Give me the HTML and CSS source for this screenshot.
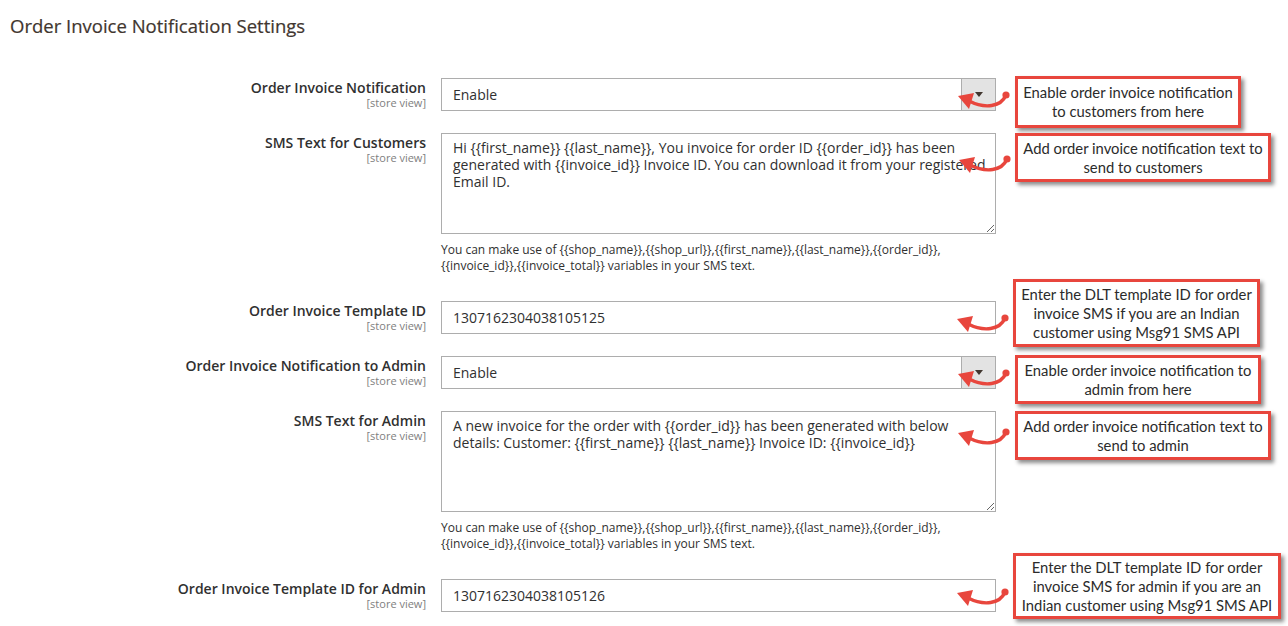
FILE: index.html
```html
<!DOCTYPE html>
<html lang="en">
<head>
    <meta charset="UTF-8">
    <title>Order Invoice Notification Settings</title>
    <link rel="stylesheet" href="styles.css">
</head>
<body>
<div class="page">
    <h2 class="section-title">Order Invoice Notification Settings</h2>

    <div class="form">
        <div class="row">
            <div class="label"><span>Order Invoice Notification</span><small>[store view]</small></div>
            <div class="control">
                <div class="select"><span>Enable</span><i class="select-btn"></i></div>
            </div>
        </div>

        <div class="row">
            <div class="label"><span>SMS Text for Customers</span><small>[store view]</small></div>
            <div class="control">
                <textarea class="textarea" readonly>Hi {{first_name}} {{last_name}}, You invoice for order ID {{order_id}} has been generated with {{invoice_id}} Invoice ID. You can download it from your registered Email ID.</textarea>
                <p class="note">You can make use of {{shop_name}},{{shop_url}},{{first_name}},{{last_name}},{{order_id}}, {{invoice_id}},{{invoice_total}} variables in your SMS text.</p>
            </div>
        </div>

        <div class="row">
            <div class="label"><span>Order Invoice Template ID</span><small>[store view]</small></div>
            <div class="control">
                <div class="input">1307162304038105125</div>
            </div>
        </div>

        <div class="row">
            <div class="label"><span>Order Invoice Notification to Admin</span><small>[store view]</small></div>
            <div class="control">
                <div class="select"><span>Enable</span><i class="select-btn"></i></div>
            </div>
        </div>

        <div class="row">
            <div class="label"><span>SMS Text for Admin</span><small>[store view]</small></div>
            <div class="control">
                <textarea class="textarea" readonly>A new invoice for the order with {{order_id}} has been generated with below details: Customer: {{first_name}} {{last_name}} Invoice ID: {{invoice_id}}</textarea>
                <p class="note">You can make use of {{shop_name}},{{shop_url}},{{first_name}},{{last_name}},{{order_id}}, {{invoice_id}},{{invoice_total}} variables in your SMS text.</p>
            </div>
        </div>

        <div class="row">
            <div class="label"><span>Order Invoice Template ID for Admin</span><small>[store view]</small></div>
            <div class="control">
                <div class="input">1307162304038105126</div>
            </div>
        </div>
    </div>

    <!-- callouts drawn over the form -->
    <div class="callout c1">Enable order invoice notification<br>to customers from here</div>
    <div class="callout c2">Add order invoice notification text to<br>send to customers</div>
    <div class="callout c3">Enter the DLT template ID for order<br>invoice SMS if you are an Indian<br>customer using Msg91 SMS API</div>
    <div class="callout c4">Enable order invoice notification to<br>admin from here</div>
    <div class="callout c5">Add order invoice notification text to<br>send to admin</div>
    <div class="callout c6">Enter the DLT template ID for order<br>invoice SMS for admin if you are an<br>Indian customer using Msg91 SMS API</div>

    <svg class="arrow a1" viewBox="0 0 56 24"><use href="#arr"/></svg>
    <svg class="arrow a2" viewBox="0 0 56 24"><use href="#arr"/></svg>
    <svg class="arrow a3" viewBox="0 0 56 24"><use href="#arr"/></svg>
    <svg class="arrow a4" viewBox="0 0 56 24"><use href="#arr"/></svg>
    <svg class="arrow a5" viewBox="0 0 56 24"><use href="#arr"/></svg>
    <svg class="arrow a6" viewBox="0 0 56 24"><use href="#arr"/></svg>

    <svg width="0" height="0" style="position:absolute">
        <defs>
            <g id="arr">
                <path d="M49 5 C44 17 28 19 12 11" fill="none" stroke="#e8463d" stroke-width="3.4" stroke-linecap="round"/>
                <circle cx="49" cy="5" r="3.6" fill="#e8463d"/>
                <polygon points="1,6 17,3 12,19" fill="#e8463d"/>
            </g>
        </defs>
    </svg>
</div>
</body>
</html>
```

FILE: styles.css
```css
body {
    margin: 0;
    background: #fff;
    font-family: "Open Sans", "Noto Sans", sans-serif;
    color: #303030;
}

.page {
    position: relative;
    width: 1288px;
    height: 626px;
    overflow: hidden;
}

.section-title {
    margin: 0;
    padding: 13px 0 0 10px;
    font-size: 18.5px;
    font-weight: 400;
    line-height: 25px;
    color: #41362f;
    -webkit-text-stroke: 0.2px #41362f;
}

.form {
    padding-top: 40px;
}

.row {
    display: grid;
    grid-template-columns: 426px 555px;
    column-gap: 15px;
    margin-bottom: 22px;
}

.label {
    display: flex;
    flex-direction: column;
    align-items: flex-end;
    text-align: right;
}

.label span {
    font-size: 14px;
    font-weight: 600;
    line-height: 19px;
    color: #303030;
}

.label small {
    font-size: 11px;
    line-height: 12px;
    color: #808080;
}

.select,
.input {
    position: relative;
    box-sizing: border-box;
    height: 33px;
    border: 1px solid #adadad;
    padding: 0 11px;
    font-size: 14px;
    line-height: 31px;
    color: #303030;
}

.select-btn {
    position: absolute;
    top: 0;
    right: 0;
    width: 33px;
    height: 31px;
    background: #e3e3e3;
    border-left: 1px solid #adadad;
}

.select-btn::after {
    content: "";
    position: absolute;
    left: 13px;
    top: 13px;
    border-left: 4px solid transparent;
    border-right: 4px solid transparent;
    border-top: 5px solid #41362f;
}

.textarea {
    display: block;
    box-sizing: border-box;
    width: 555px;
    height: 101px;
    margin: 0;
    border: 1px solid #adadad;
    border-radius: 0;
    padding: 5px 6px 5px 11px;
    font-family: "Open Sans", "Noto Sans", sans-serif;
    font-size: 14px;
    line-height: 17px;
    color: #303030;
    outline: none;
}

.note {
    margin: 8px 0 5px;
    font-size: 12px;
    line-height: 16px;
    color: #303030;
}

.callout {
    position: absolute;
    box-sizing: border-box;
    border: 3px solid #e8463d;
    background: #fff;
    box-shadow: 3px 3px 4px rgba(0, 0, 0, 0.45);
    font-family: Lato, "Noto Sans", sans-serif;
    font-size: 14.8px;
    line-height: 19px;
    color: #2b2b2b;
    text-align: center;
    display: flex;
    align-items: center;
    justify-content: center;
}

.c1 { left: 1015px; top: 76px; width: 226px; height: 52px; }
.c2 { left: 1015px; top: 133px; width: 256px; height: 49px; }
.c3 { left: 1013px; top: 279px; width: 247px; height: 68px; }
.c4 { left: 1015px; top: 355px; width: 246px; height: 49px; }
.c5 { left: 1015px; top: 411px; width: 256px; height: 49px; }
.c6 { left: 1013px; top: 553px; width: 268px; height: 66px; }

.arrow {
    position: absolute;
    width: 56px;
    height: 24px;
    overflow: visible;
}

.a1 { left: 957px; top: 90px; }
.a2 { left: 958px; top: 154px; }
.a3 { left: 956px; top: 313px; }
.a4 { left: 957px; top: 368px; }
.a5 { left: 957px; top: 427px; }
.a6 { left: 956px; top: 587px; }
```
